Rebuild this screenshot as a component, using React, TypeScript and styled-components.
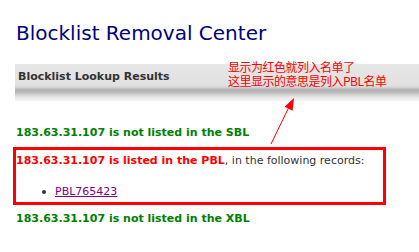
import styled, { createGlobalStyle } from "styled-components";

const GlobalStyle = createGlobalStyle`
  body {
    margin: 0;
    background: #ffffff;
    font-family: "DejaVu Sans", Verdana, sans-serif;
  }
`;

const records = ["PBL765423"];

export default function App() {
  return (
    <>
      <GlobalStyle />
      <Page>
        <Title>Blocklist Removal Center</Title>
        <ResultsBar>Blocklist Lookup Results</ResultsBar>

        <StatusLine $tone="ok" $gap={25}>
          183.63.31.107 is not listed in the SBL
        </StatusLine>

        <Highlight>
          <StatusLine $tone="listed">
            183.63.31.107 is listed in the PBL
            <Plain>, in the following records:</Plain>
          </StatusLine>
          <RecordList>
            {records.map((r) => (
              <Record key={r}>
                <RecordLink href="#">{r}</RecordLink>
              </Record>
            ))}
          </RecordList>
        </Highlight>

        <StatusLine $tone="ok" $gap={7}>
          183.63.31.107 is not listed in the XBL
        </StatusLine>

        <Note>
          <NoteLine>显示为红色就列入名单了</NoteLine>
          <NoteLine>这里显示的意思是列入PBL名单</NoteLine>
        </Note>

        <Arrow viewBox="0 0 419 252" width="419" height="252">
          <line x1="271" y1="144" x2="289" y2="107" stroke="#ff0000" strokeWidth="1" />
          <polygon points="294,98 292.6,110.7 284.6,106.7" fill="#ff0000" />
        </Arrow>
      </Page>
    </>
  );
}

const Page = styled.div`
  position: relative;
  width: 419px;
  height: 252px;
  padding-left: 16px;
  box-sizing: border-box;
  overflow: hidden;
`;

const Title = styled.h1`
  margin: 21px 0 0;
  font-size: 20px;
  line-height: 24px;
  font-weight: normal;
  color: #000080;
`;

const ResultsBar = styled.div`
  margin: 19px 0 0 -1px;
  height: 37px;
  box-sizing: border-box;
  padding: 6px 0 0 3px;
  font-size: 11px;
  line-height: 13px;
  font-weight: bold;
  color: #333333;
  background: linear-gradient(
    to bottom,
    #e6e6e6 0px,
    #e1e1e1 21px,
    #d8d8d8 23px,
    #b0b0b0 26px,
    #b8b8b8 28px,
    #d4d4d4 31px,
    #ebebeb 34px,
    #f4f4f4 37px
  );
`;

const StatusLine = styled.div<{ $tone: "ok" | "listed"; $gap?: number }>`
  margin-top: ${({ $gap }) => $gap ?? 0}px;
  font-size: 11px;
  line-height: 13px;
  font-weight: bold;
  color: ${({ $tone }) => ($tone === "ok" ? "#008000" : "#ff0000")};
`;

const Plain = styled.span`
  font-weight: normal;
  color: #333333;
`;

const Highlight = styled.div`
  margin: 8px 0 0 -3px;
  width: 373px;
  box-sizing: border-box;
  border: 3px solid #ff0000;
  padding: 4px 0 4px 0;
`;

const RecordList = styled.ul`
  margin: 18px 0 0;
  padding: 0;
  list-style: none;
`;

const Record = styled.li`
  display: flex;
  align-items: center;
  padding-left: 26px;
  font-size: 11px;
  line-height: 13px;

  &::before {
    content: "";
    width: 4px;
    height: 4px;
    border-radius: 50%;
    background: #333333;
    margin-right: 9px;
  }
`;

const RecordLink = styled.a`
  color: #800080;
  text-decoration: underline;
`;

const Note = styled.div`
  position: absolute;
  left: 228px;
  top: 60px;
  color: #ff0000;
  white-space: nowrap;
`;

const NoteLine = styled.div`
  height: 14px;
  font-family: "Noto Sans CJK SC", sans-serif;
  font-size: 12px;
  line-height: 14px;
  letter-spacing: -0.5px;
`;

const Arrow = styled.svg`
  position: absolute;
  left: 0;
  top: 0;
  pointer-events: none;
`;
